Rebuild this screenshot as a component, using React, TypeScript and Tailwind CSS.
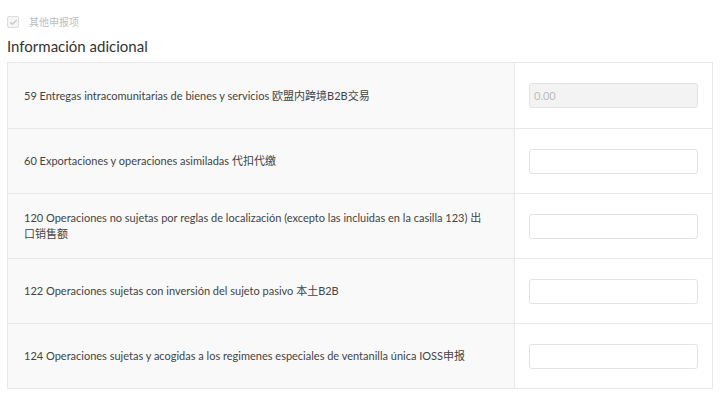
import { Check } from 'lucide-react'

const ROWS: { label: string; value?: string; disabled?: boolean }[] = [
  { label: '59 Entregas intracomunitarias de bienes y servicios 欧盟内跨境B2B交易', value: '0.00', disabled: true },
  { label: '60 Exportaciones y operaciones asimiladas 代扣代缴' },
  { label: '120 Operaciones no sujetas por reglas de localización (excepto las incluidas en la casilla 123) 出口销售额' },
  { label: '122 Operaciones sujetas con inversión del sujeto pasivo 本土B2B' },
  { label: '124 Operaciones sujetas y acogidas a los regimenes especiales de ventanilla única IOSS申报' },
]

export default function App() {
  return (
    <div
      className="w-[720px] h-[397px] bg-white text-[#333] overflow-hidden"
      style={{ fontFamily: 'Lato, "Noto Sans CJK SC", sans-serif' }}
    >
      {/* Checkbox */}
      <div className="flex items-center gap-[10px] pl-[7px] pt-[16px] h-[28px]">
        <span className="w-[12px] h-[12px] rounded-[2px] border border-[#dcdcdc] bg-[#f5f5f5] flex items-center justify-center">
          <Check size={9} strokeWidth={3} className="text-[#c4c4c4]" />
        </span>
        <span className="text-[10px] text-[#bdbdbd] leading-none" style={{ fontFamily: '"Noto Sans CJK SC", sans-serif' }}>
          其他申报项
        </span>
      </div>

      <h2 className="pl-[7px] mt-[8px] text-[15px] leading-[20px] text-[#333]">Información adicional</h2>

      {/* Table */}
      <div className="ml-[7px] mt-[6px] w-[706px] border border-[#e8e8e8]">
        {ROWS.map((row, i) => (
          <div
            key={i}
            className={`flex h-[65px] ${i > 0 ? 'border-t border-[#e8e8e8]' : ''}`}
          >
            <div className="w-[507px] bg-[#f9f9f9] border-r border-[#e8e8e8] flex items-center pl-[16px] pr-[28px]">
              <p className="text-[11px] leading-[16px] text-[#444]">{row.label}</p>
            </div>
            <div className="flex-1 flex items-center pl-[14px] pr-[14px]">
              <input
                disabled={row.disabled}
                defaultValue={row.value}
                className={`w-full h-[25px] rounded-[3px] border border-[#e3e3e3] px-[4px] text-[11px] outline-none ${
                  row.disabled ? 'bg-[#f3f3f3] text-[#bbb]' : 'bg-white'
                }`}
              />
            </div>
          </div>
        ))}
      </div>
    </div>
  )
}
